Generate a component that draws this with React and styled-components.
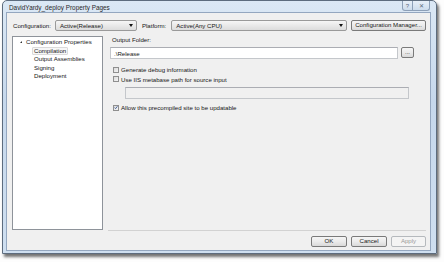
import styled, { createGlobalStyle } from "styled-components";

const Global = createGlobalStyle`
  html, body {
    margin: 0;
    padding: 0;
    background: #ffffff;
  }
  * {
    box-sizing: border-box;
  }
`;

const Desktop = styled.div`
  width: 444px;
  height: 262px;
  overflow: hidden;
  background: #fdfdfd;
  font-family: "Liberation Sans", Arial, sans-serif;
  font-size: 6.1px;
  color: #161616;
`;

const Window = styled.div`
  margin-left: 2px;
  width: 435px;
  height: 254px;
  border: 1px solid #5d6c7e;
  border-radius: 5px 5px 0 0;
  background: linear-gradient(180deg, #dbe8f5 0%, #c6d8ec 40%, #cfdff0 100%);
  padding: 0 5px 2px 3px;
  display: flex;
  flex-direction: column;
  box-shadow: 2px 3px 3px rgba(0, 0, 0, 0.55);
`;

const TitleBar = styled.div`
  height: 12px;
  display: flex;
  align-items: flex-start;
  justify-content: space-between;
`;

const Title = styled.span`
  padding: 3px 0 0 3px;
  font-size: 6.4px;
  color: #2a2a2a;
`;

const Caption = styled.div`
  display: flex;
  margin-right: 1px;
`;

const CapButton = styled.div`
  width: ${(p) => p.w}px;
  height: 10px;
  border: 1px solid #8da0b8;
  border-top: none;
  border-radius: ${(p) => (p.first ? "0 0 0 3px" : "0 0 3px 0")};
  ${(p) => (p.first ? "" : "border-left: none;")}
  background: linear-gradient(180deg, #e7eff8 0%, #cddcec 100%);
  display: flex;
  align-items: center;
  justify-content: center;
  font-size: 6px;
  color: #5c6a7c;
  line-height: 1;
`;

const Client = styled.div`
  flex: 1;
  border: 1px solid #94a7c0;
  background: #f0f0f0;
  padding: 6px 4px 3px 5px;
  display: flex;
  flex-direction: column;
`;

const ConfigRow = styled.div`
  height: 12px;
  display: flex;
  align-items: center;
`;

const Label = styled.span`
  margin-right: ${(p) => p.mr || 0}px;
  margin-left: ${(p) => p.ml || 0}px;
  white-space: nowrap;
`;

const Combo = styled.div`
  width: ${(p) => p.w}px;
  height: 11px;
  border: 1px solid #9a9a9a;
  border-radius: 2px;
  background: linear-gradient(180deg, #f6f6f6 0%, #e9e9e9 50%, #dcdcdc 100%);
  display: flex;
  align-items: center;
  justify-content: space-between;
  padding: 0 3px 0 4px;
`;

const Arrow = styled.span`
  width: 0;
  height: 0;
  border-left: 2px solid transparent;
  border-right: 2px solid transparent;
  border-top: 3px solid #111;
`;

const Button = styled.div`
  width: ${(p) => p.w}px;
  height: ${(p) => p.h || 11}px;
  margin-left: ${(p) => p.ml || 0}px;
  border: 1px solid ${(p) => (p.disabled ? "#b5b9bd" : "#7a7a7a")};
  border-radius: 2px;
  background: ${(p) =>
    p.disabled
      ? "#f4f4f4"
      : "linear-gradient(180deg, #f5f5f5 0%, #ebebeb 50%, #d9d9d9 100%)"};
  color: ${(p) => (p.disabled ? "#9a9a9a" : "#161616")};
  display: flex;
  align-items: center;
  justify-content: center;
  white-space: nowrap;
  line-height: 1;
`;

const Body = styled.div`
  margin-top: 5px;
  height: 194px;
  display: flex;
`;

const Tree = styled.div`
  width: 91px;
  height: 194px;
  background: #ffffff;
  border: 1px solid #8e939a;
  padding-top: 1px;
`;

const TreeItem = styled.div`
  height: 8.5px;
  line-height: 8.5px;
  padding-left: ${(p) => p.indent}px;
  display: flex;
  align-items: center;
`;

const Expander = styled.span`
  width: 0;
  height: 0;
  margin-right: 4px;
  border-left: 2.5px solid transparent;
  border-bottom: 2.5px solid #333;
`;

const Node = styled.span`
  padding: 0 1px;
  border: 1px solid ${(p) => (p.selected ? "#dadada" : "transparent")};
  border-radius: 1px;
  background: ${(p) => (p.selected ? "#f7f7f7" : "transparent")};
  line-height: 6.5px;
`;

const Panel = styled.div`
  margin-left: 5px;
  width: 318px;
  height: 195px;
  border-bottom: 1px solid #d2d2d2;
  padding: 0 0 0 2px;
  display: flex;
  flex-direction: column;
`;

const FieldLabel = styled.div`
  height: 8px;
  line-height: 8px;
  padding-left: 2px;
`;

const FolderRow = styled.div`
  margin-top: 3px;
  display: flex;
  align-items: flex-start;
`;

const TextBox = styled.div`
  width: ${(p) => p.w}px;
  height: ${(p) => p.h}px;
  margin-left: ${(p) => p.ml || 0}px;
  margin-top: ${(p) => p.mt || 0}px;
  background: ${(p) => (p.disabled ? "#f0f0f0" : "#ffffff")};
  border: 1px solid #c4c7cb;
  border-top-color: #abadb3;
  display: flex;
  align-items: center;
  padding-left: 3px;
`;

const CheckRow = styled.div`
  margin-top: ${(p) => p.mt || 0}px;
  height: 9.5px;
  padding-left: 3px;
  display: flex;
  align-items: center;
`;

const Box = styled.span`
  width: 6px;
  height: 6px;
  margin-right: 2px;
  border: 1px solid #8f8f8f;
  background: linear-gradient(135deg, #dcdcdc 0%, #f4f4f4 100%);
  display: flex;
  align-items: center;
  justify-content: center;
`;

const Footer = styled.div`
  margin-top: 6px;
  display: flex;
  justify-content: flex-end;
`;

function Check({ checked, children, mt }) {
  return (
    <CheckRow mt={mt}>
      <Box>
        {checked && (
          <svg width="5" height="5" viewBox="0 0 5 5">
            <path d="M0.8 2.6 L2 3.9 L4.3 0.9" fill="none" stroke="#2c4b8e" strokeWidth="1" />
          </svg>
        )}
      </Box>
      <span>{children}</span>
    </CheckRow>
  );
}

export default function App() {
  return (
    <Desktop>
      <Global />
      <Window>
        <TitleBar>
          <Title>DavidYardy_deploy Property Pages</Title>
          <Caption>
            <CapButton w={11} first>?</CapButton>
            <CapButton w={17}>✕</CapButton>
          </Caption>
        </TitleBar>
        <Client>
          <ConfigRow>
            <Label ml={1} mr={4}>Configuration:</Label>
            <Combo w={82}>
              <span>Active(Release)</span>
              <Arrow />
            </Combo>
            <Label ml={5} mr={5}>Platform:</Label>
            <Combo w={176}>
              <span>Active(Any CPU)</span>
              <Arrow />
            </Combo>
            <Button w={75} ml={4}>Configuration Manager...</Button>
          </ConfigRow>
          <Body>
            <Tree>
              <TreeItem indent={7}>
                <Expander />
                <span>Configuration Properties</span>
              </TreeItem>
              <TreeItem indent={19}>
                <Node selected>Compilation</Node>
              </TreeItem>
              <TreeItem indent={19}>
                <Node>Output Assemblies</Node>
              </TreeItem>
              <TreeItem indent={19}>
                <Node>Signing</Node>
              </TreeItem>
              <TreeItem indent={19}>
                <Node>Deployment</Node>
              </TreeItem>
            </Tree>
            <Panel>
              <FieldLabel>Output Folder:</FieldLabel>
              <FolderRow>
                <TextBox w={288} h={12}>.\Release</TextBox>
                <Button w={13} h={11} ml={3}>...</Button>
              </FolderRow>
              <Check mt={6}>Generate debug information</Check>
              <Check>Use IIS metabase path for source input</Check>
              <TextBox w={284} h={12} ml={15} mt={3} disabled />
              <Check mt={4} checked>
                Allow this precompiled site to be updatable
              </Check>
            </Panel>
          </Body>
          <Footer>
            <Button w={36}>OK</Button>
            <Button w={36} ml={4}>Cancel</Button>
            <Button w={35} ml={4} disabled>Apply</Button>
          </Footer>
        </Client>
      </Window>
    </Desktop>
  );
}
